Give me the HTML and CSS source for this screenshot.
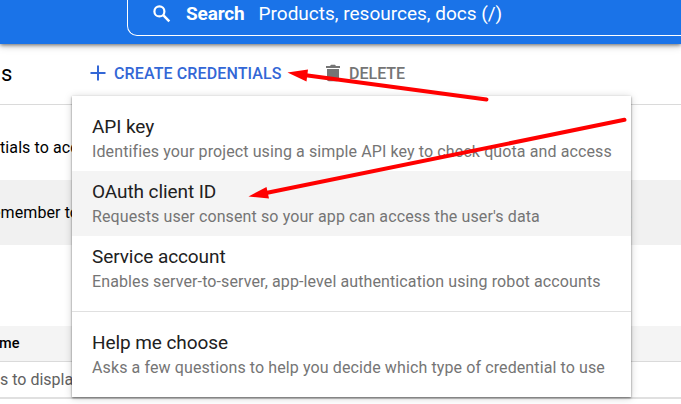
FILE: index.html
```
<!DOCTYPE html>
<html lang="en">
<head>
<meta charset="utf-8">
<title>Credentials</title>
<link rel="stylesheet" href="styles.css">
</head>
<body>
<header class="topbar">
  <div class="search">
    <svg class="search-icon" viewBox="0 0 18 18"><circle cx="6.4" cy="6.4" r="5" fill="none" stroke="#fff" stroke-width="2.2"/><path d="M10.2 10.2L16.3 16.3" stroke="#fff" stroke-width="2.5"/></svg>
    <span class="search-label">Search</span>
    <span class="search-hint">Products, resources, docs (/)</span>
  </div>
</header>
<div class="toolbar">
  <h1 class="page-title">s</h1>
  <button class="action create">
    <svg class="plus" viewBox="0 0 16 16"><path d="M8 .5V15.500M.5 8H15.500" stroke="#3367d6" stroke-width="2"/></svg>
    <span>CREATE CREDENTIALS</span>
  </button>
  <button class="action delete">
    <svg class="trash" viewBox="0 0 16 18"><path d="M1 2H5L6 .8H10L11 2H15V4H1ZM2 5H14V15.500Q14 17.300 12.200 17.300H3.800Q2 17.300 2 15.500Z" fill="#757575"/></svg>
    <span>DELETE</span>
  </button>
</div>
<main class="content">
  <p class="intro">tials to access</p>
  <div class="banner"><span class="banner-text">emember to</span><span class="banner-end">.</span></div>
  <div class="table">
    <div class="table-head">me</div>
    <div class="table-row">s to display</div>
  </div>
</main>
<div class="menu">
  <div class="item"><div class="name">API key</div><div class="desc">Identifies your project using a simple API key to check quota and access</div></div>
  <div class="item active"><div class="name">OAuth client ID</div><div class="desc">Requests user consent so your app can access the user's data</div></div>
  <div class="item"><div class="name">Service account</div><div class="desc">Enables server-to-server, app-level authentication using robot accounts</div></div>
  <div class="divider"></div>
  <div class="item"><div class="name">Help me choose</div><div class="desc">Asks a few questions to help you decide which type of credential to use</div></div>
</div>
<svg class="arrows" viewBox="0 0 681 404">
  <g stroke="#f00" stroke-width="4" stroke-linecap="round"><path d="M304 75L486.500 99.500"/><path d="M266 193L624.500 119.800"/></g>
  <path d="M287.500 72.500L308 69.500L306.500 81.500ZM248.500 196.500L266.500 187L269 198.500Z" fill="#f00"/>
</svg>
</body>
</html>
```
FILE: styles.css
```
* { box-sizing: border-box; }
html { overflow: hidden; }
body {
  margin: 0;
  width: 100%;
  height: 404px;
  overflow: hidden;
  position: relative;
  background: #fff;
  font-family: Roboto, "Liberation Sans", sans-serif;
  color: #000;
}
.topbar {
  position: relative;
  height: 44px;
  padding-left: 127px;
  background: #1a73e8;
  box-shadow: 0 1px 4px rgba(0, 0, 0, .55), 0 3px 8px rgba(0, 0, 0, .12);
}
.search {
  display: flex;
  align-items: center;
  height: 36px;
  padding: 0 0 8px 25px;
  border: solid #fff;
  border-width: 0 0 1px 1px;
  border-radius: 0 0 0 10px;
  color: #fff;
  white-space: nowrap;
}
.search-icon { width: 18px; height: 18px; margin-right: 15px; }
.search-label { font-weight: 700; font-size: 19px; letter-spacing: -.15px; margin-right: 14px; }
.search-hint { font-size: 19px; }
.toolbar {
  display: flex;
  align-items: center;
  height: 61px;
  padding-bottom: 2px;
  border-bottom: 1px solid #dadada;
}
.page-title { width: 90px; margin: 0; padding-left: 1px; font-size: 22px; font-weight: 400; }
.action {
  display: flex;
  align-items: center;
  gap: 8px;
  padding: 0;
  border: 0;
  background: none;
  font: 500 16px Roboto, sans-serif;
  white-space: nowrap;
}
.create { width: 235px; color: #3367d6; letter-spacing: .12px; }
.delete { color: #757575; }
.plus { width: 16px; height: 16px; }
.trash { width: 16px; height: 18px; }
.intro { margin: 0; height: 75px; padding-top: 33px; font-size: 16px; line-height: 20px; letter-spacing: .1px; }
.banner {
  display: flex;
  justify-content: space-between;
  height: 65px;
  padding-right: 49px;
  background: #f1f1f1;
  font-size: 16px;
  line-height: 65px;
}
.banner-text { margin-left: -8px; letter-spacing: .1px; }
.banner-end { color: #185abc; }
.table { margin-top: 81px; border-bottom: 2px solid #e0e0e0; }
.table-head {
  height: 36px;
  border-bottom: 1px solid #dadada;
  background: #f4f4f4;
  font-size: 14.500px;
  font-weight: 500;
  line-height: 35px;
  text-indent: -1px;
}
.table-row { height: 35px; font-size: 16px; line-height: 36px; color: #616161; }
.menu {
  position: absolute;
  left: 72px;
  top: 96px;
  width: 559px;
  height: 301px;
  padding-top: 10px;
  background: #fff;
  box-shadow: 0 1px 2px rgba(0, 0, 0, .5), 0 1px 8px rgba(0, 0, 0, .18);
}
.item { height: 65px; padding: 8px 20px 0; white-space: nowrap; }
.active { background: #f4f4f4; }
.name { font-size: 19px; line-height: 25px; letter-spacing: -.08px; color: #212121; }
.desc { font-size: 16px; line-height: 25px; letter-spacing: .11px; color: #757575; }
.divider { height: 1px; margin: 10px 0; background: #e0e0e0; }
.arrows { position: absolute; left: 0; top: 0; width: 681px; height: 404px; }
```
